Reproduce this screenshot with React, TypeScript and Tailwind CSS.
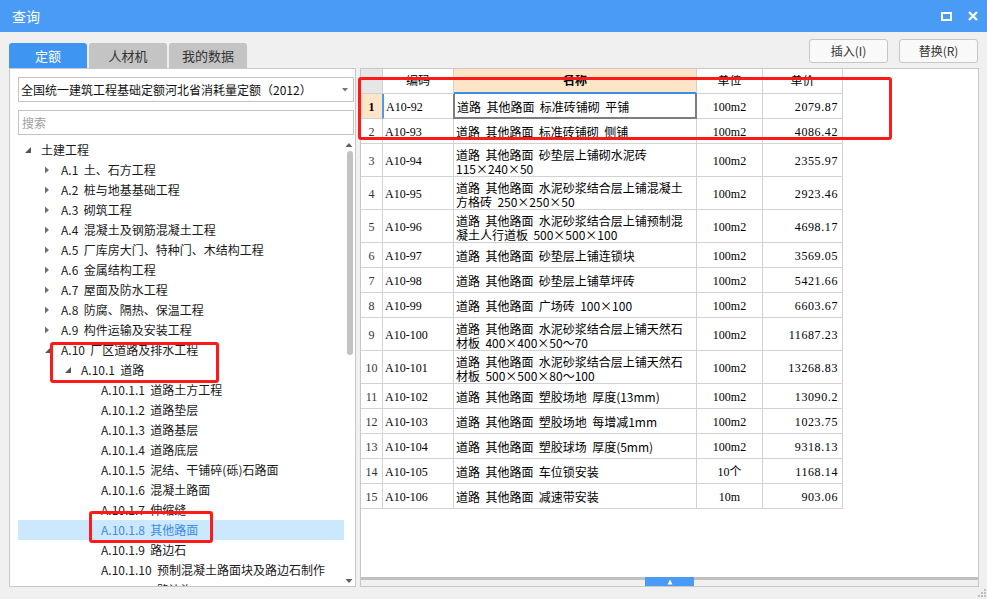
import React from 'react'

type TreeItem = {
    label: string
    level: number
    icon?: 'open' | 'closed'
    selected?: boolean
}

const tree: TreeItem[] = [
    { label: '土建工程', level: 0, icon: 'open' },
    { label: 'A.1  土、石方工程', level: 1, icon: 'closed' },
    { label: 'A.2  桩与地基基础工程', level: 1, icon: 'closed' },
    { label: 'A.3  砌筑工程', level: 1, icon: 'closed' },
    { label: 'A.4  混凝土及钢筋混凝土工程', level: 1, icon: 'closed' },
    { label: 'A.5  厂库房大门、特种门、木结构工程', level: 1, icon: 'closed' },
    { label: 'A.6  金属结构工程', level: 1, icon: 'closed' },
    { label: 'A.7  屋面及防水工程', level: 1, icon: 'closed' },
    { label: 'A.8  防腐、隔热、保温工程', level: 1, icon: 'closed' },
    { label: 'A.9  构件运输及安装工程', level: 1, icon: 'closed' },
    { label: 'A.10  厂区道路及排水工程', level: 1, icon: 'open' },
    { label: 'A.10.1  道路', level: 2, icon: 'open' },
    { label: 'A.10.1.1  道路土方工程', level: 3 },
    { label: 'A.10.1.2  道路垫层', level: 3 },
    { label: 'A.10.1.3  道路基层', level: 3 },
    { label: 'A.10.1.4  道路底层', level: 3 },
    { label: 'A.10.1.5  泥结、干铺碎(砾)石路面', level: 3 },
    { label: 'A.10.1.6  混凝土路面', level: 3 },
    { label: 'A.10.1.7  伸缩缝', level: 3 },
    { label: 'A.10.1.8  其他路面', level: 3, selected: true },
    { label: 'A.10.1.9  路边石', level: 3 },
    { label: 'A.10.1.10  预制混凝土路面块及路边石制作', level: 3 },
    { label: 'A.10.1.11  路边沟', level: 3 },
]

type Row = { code: string; name: string[]; unit: string; price: string }

const rows: Row[] = [
    { code: 'A10-92', name: ['道路  其他路面  标准砖铺砌  平铺'], unit: '100m2', price: '2079.87' },
    { code: 'A10-93', name: ['道路  其他路面  标准砖铺砌  侧铺'], unit: '100m2', price: '4086.42' },
    { code: 'A10-94', name: ['道路  其他路面  砂垫层上铺砌水泥砖', '115×240×50'], unit: '100m2', price: '2355.97' },
    { code: 'A10-95', name: ['道路  其他路面  水泥砂浆结合层上铺混凝土', '方格砖  250×250×50'], unit: '100m2', price: '2923.46' },
    { code: 'A10-96', name: ['道路  其他路面  水泥砂浆结合层上铺预制混', '凝土人行道板  500×500×100'], unit: '100m2', price: '4698.17' },
    { code: 'A10-97', name: ['道路  其他路面  砂垫层上铺连锁块'], unit: '100m2', price: '3569.05' },
    { code: 'A10-98', name: ['道路  其他路面  砂垫层上铺草坪砖'], unit: '100m2', price: '5421.66' },
    { code: 'A10-99', name: ['道路  其他路面  广场砖  100×100'], unit: '100m2', price: '6603.67' },
    { code: 'A10-100', name: ['道路  其他路面  水泥砂浆结合层上铺天然石', '材板  400×400×50～70'], unit: '100m2', price: '11687.23' },
    { code: 'A10-101', name: ['道路  其他路面  水泥砂浆结合层上铺天然石', '材板  500×500×80～100'], unit: '100m2', price: '13268.83' },
    { code: 'A10-102', name: ['道路  其他路面  塑胶场地  厚度(13mm)'], unit: '100m2', price: '13090.2' },
    { code: 'A10-103', name: ['道路  其他路面  塑胶场地  每增减1mm'], unit: '100m2', price: '1023.75' },
    { code: 'A10-104', name: ['道路  其他路面  塑胶球场  厚度(5mm)'], unit: '100m2', price: '9318.13' },
    { code: 'A10-105', name: ['道路  其他路面  车位锁安装'], unit: '10个', price: '1168.14' },
    { code: 'A10-106', name: ['道路  其他路面  减速带安装'], unit: '10m', price: '903.06' },
]

function TreeIcon({ kind }: { kind?: 'open' | 'closed' }) {
    return (
        <svg width="16" height="20" viewBox="0 0 16 20" className="flex-none">
            {kind === 'closed' && <path d="M5 6.5 L9 10 L5 13.5 Z" fill="#707070" />}
            {kind === 'open' && <path d="M11 7 L11 13 L5 13 Z" fill="#555" />}
        </svg>
    )
}

function HeaderCell({ label, bold, className }: { label: string; bold?: boolean; className: string }) {
    return (
        <div className={`h-[25px] border-r border-b border-[#d2d2d2] flex justify-center ${className}`}>
            <div className="mt-[6px] h-[12px] overflow-hidden">
                <div className={`-mt-[3px] leading-[16px] text-[12px] text-black ${bold ? 'font-bold' : ''}`}>{label}</div>
            </div>
        </div>
    )
}

export default function App() {
    const num = "font-['Liberation_Serif','Noto_Sans_CJK_SC',serif] text-[12px]"

    return (
        <div className="relative w-[987px] h-[599px] overflow-hidden bg-[#f0f0f0] font-['Noto_Sans_CJK_SC','Noto_Sans',sans-serif] text-[12px] text-[#1a1a1a]">
            {/* title bar */}
            <div className="h-[32px] bg-[#4a9bf5] flex items-center justify-between pl-[12px] pr-[9px]">
                <span className="text-[14px] text-white leading-none">查询</span>
                <div className="flex items-center gap-[16px]">
                    <svg width="11" height="9" viewBox="0 0 11 9">
                        <rect x="1" y="1" width="9" height="7" fill="none" stroke="white" strokeWidth="2" />
                    </svg>
                    <svg width="10" height="10" viewBox="0 0 10 10">
                        <path d="M1 1 L9 9 M9 1 L1 9" stroke="white" strokeWidth="2.2" />
                    </svg>
                </div>
            </div>

            {/* tabs + buttons */}
            <div className="h-[36px] flex justify-between pl-[9px] pr-[9px]">
                <div className="self-end flex gap-[2px]">
                    <div className="w-[78px] h-[25px] rounded-t-[3px] bg-[#3f95f2] text-white text-[13px] flex items-center justify-center">定额</div>
                    <div className="w-[78px] h-[25px] rounded-t-[3px] bg-[#c4c4c4] text-[#333] text-[13px] flex items-center justify-center">人材机</div>
                    <div className="w-[78px] h-[25px] rounded-t-[3px] bg-[#c4c4c4] text-[#333] text-[13px] flex items-center justify-center">我的数据</div>
                </div>
                <div className="self-start mt-[7px] flex gap-[11px]">
                    <button className="w-[79px] h-[24px] rounded-[3px] border border-[#c6c6c6] bg-[#f9f9f9] text-[12px] text-[#333]">插入(I)</button>
                    <button className="w-[79px] h-[24px] rounded-[3px] border border-[#c6c6c6] bg-[#f9f9f9] text-[12px] text-[#333]">替换(R)</button>
                </div>
            </div>

            {/* main */}
            <div className="h-[519px] flex gap-[4px] pl-[9px] pr-[8px]">
                {/* left panel */}
                <div className="w-[347px] border border-[#c8c8c8] bg-white flex flex-col">
                    <div className="mt-[8px] ml-[8px] mr-[1px] h-[25px] border border-[#c4c4c4] flex items-center justify-between pl-[2px] pr-[5px]">
                        <span className="text-[12px] text-[#111] whitespace-nowrap">全国统一建筑工程基础定额河北省消耗量定额（2012）</span>
                        <svg width="6" height="4" viewBox="0 0 6 4"><path d="M0 0 L6 0 L3 3.5 Z" fill="#777" /></svg>
                    </div>
                    <div className="mt-[8px] ml-[8px] mr-[1px] h-[25px] border border-[#c4c4c4] flex items-center pl-[3px]">
                        <span className="text-[12px] text-[#a0a0a0]">搜索</span>
                    </div>
                    <div className="mt-[5px] flex-1 flex min-h-0">
                        <div className="ml-[8px] w-[326px] overflow-hidden">
                            {tree.map((t) => (
                                <div
                                    key={t.label}
                                    className={`h-[20px] flex items-center whitespace-pre ${t.selected ? 'bg-[#cce8ff] text-[#3a8ce4]' : 'text-[#1a1a1a]'}`}
                                    style={{ paddingLeft: 2 + t.level * 20 }}
                                >
                                    <TreeIcon kind={t.icon} />
                                    <span className="ml-[5px] leading-[20px]">{t.label}</span>
                                </div>
                            ))}
                        </div>
                        <div className="w-[11px] flex flex-col items-center">
                            <svg width="11" height="10" viewBox="0 0 11 10">
                                <path d="M1.5 7 L5 3 L8.5 7 Z" fill="#606060" />
                            </svg>
                            <div className="mt-[1px] h-[204px] w-[6px] rounded-[3px] bg-[#c2c2c2]" />
                            <div className="flex-1" />
                            <svg width="11" height="10" viewBox="0 0 11 10">
                                <path d="M1.5 3 L8.5 3 L5 7 Z" fill="#606060" />
                            </svg>
                        </div>
                    </div>
                </div>

                {/* right panel */}
                <div className="w-[619px] border border-[#c8c8c8] bg-white flex flex-col">
                    <div className="flex-1 min-h-0">
                        <div className="grid grid-cols-[22px_71px_243px_66px_80px] w-[482px]">
                            <HeaderCell label="" className="bg-[#e6e6e6]" />
                            <HeaderCell label="编码" className="bg-white" />
                            <div className="h-[25px] border-r border-b-2 border-b-[#3a8de8] border-r-[#d2d2d2] bg-[#fde6c8] flex justify-center">
                                <div className="mt-[6px] h-[12px] overflow-hidden">
                                    <div className="-mt-[3px] leading-[16px] text-[12px] text-black font-bold">名称</div>
                                </div>
                            </div>
                            <HeaderCell label="单位" className="bg-white" />
                            <HeaderCell label="单价" className="bg-white" />

                            {rows.map((r, i) => {
                                const two = r.name.length > 1
                                const h = two ? 'h-[33px]' : 'h-[25px]'
                                const first = i === 0
                                return (
                                    <React.Fragment key={r.code}>
                                        <div className={`${h} border-r border-b border-[#d2d2d2] flex items-center justify-center pt-[2px] ${first ? 'bg-[#fde6c8]' : ''}`}>
                                            <span className={`${num} ${first ? 'font-bold text-black' : 'text-[#333]'}`}>{i + 1}</span>
                                        </div>
                                        <div className={`${h} border-r border-b border-[#d2d2d2] flex items-center pl-[2px] pt-[2px] ${first ? 'border-l-2 border-l-[#4a9bf5] -ml-[1px]' : ''}`}>
                                            <span className={`${num} text-black`}>{r.code}</span>
                                        </div>
                                        <div className={`${h} border-r border-b ${first ? 'border-l-2 border-r-2 border-b-2 border-[#7d7d7d] -ml-[1px]' : 'border-[#d2d2d2]'} flex flex-col ${two ? 'pt-[4px]' : 'justify-center pt-[2px]'} pl-[2px] whitespace-pre text-black leading-[14px]`}>
                                            {r.name.map((l) => (
                                                <div key={l}>{l}</div>
                                            ))}
                                        </div>
                                        <div className={`${h} border-r border-b border-[#d2d2d2] flex items-center justify-center pt-[2px]`}>
                                            <span className={`${num} text-black`}>{r.unit}</span>
                                        </div>
                                        <div className={`${h} border-r border-b border-[#d2d2d2] flex items-center justify-end pr-[4px] pt-[2px]`}>
                                            <span className={`${num} text-black tracking-[0.6px]`}>{r.price}</span>
                                        </div>
                                    </React.Fragment>
                                )
                            })}
                        </div>
                    </div>
                    <div className="h-[9px] flex">
                        <div className="w-[284px] border-t-[3px] border-[#c0c0c0] bg-[#f0f0f0]" />
                        <div className="w-[49px] bg-[#4a9bf5] flex items-center justify-center">
                            <svg width="6" height="6" viewBox="0 0 6 6"><path d="M3 0.5 L5.5 5.5 L0.5 5.5 Z" fill="white" /></svg>
                        </div>
                        <div className="flex-1 border-t-[3px] border-[#c0c0c0] bg-[#f0f0f0]" />
                    </div>
                </div>
            </div>

            {/* resize grip */}
            <svg width="8" height="8" viewBox="0 0 8 8" className="absolute right-[1px] bottom-[2px]">
                <rect x="6" y="0" width="2" height="2" fill="#bdbdbd" />
                <rect x="3" y="3" width="2" height="2" fill="#bdbdbd" />
                <rect x="6" y="3" width="2" height="2" fill="#bdbdbd" />
                <rect x="0" y="6" width="2" height="2" fill="#bdbdbd" />
                <rect x="3" y="6" width="2" height="2" fill="#bdbdbd" />
                <rect x="6" y="6" width="2" height="2" fill="#bdbdbd" />
            </svg>

            {/* annotation boxes */}
            <div className="absolute left-[50px] top-[342px] w-[169px] h-[41px] border-[3px] border-[#ff1a1a] rounded-[3px]" />
            <div className="absolute left-[89px] top-[511px] w-[124px] h-[32px] border-[3px] border-[#ff1a1a] rounded-[3px]" />
            <div className="absolute left-[358px] top-[77px] w-[534px] h-[63px] border-[3px] border-[#ff1a1a] rounded-[3px]" />
        </div>
    )
}
